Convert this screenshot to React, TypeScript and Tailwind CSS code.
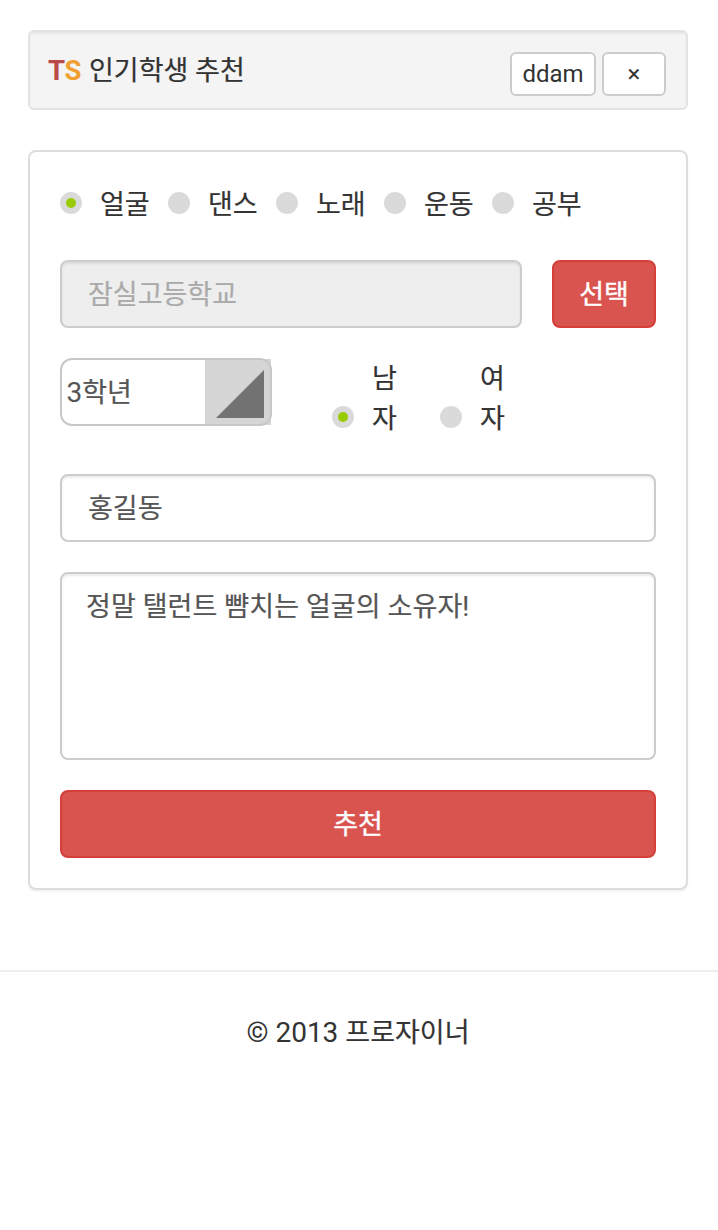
import type { ReactNode } from "react";

const subjects = ["얼굴", "댄스", "노래", "운동", "공부"];

function Radio({ checked }: { checked?: boolean }) {
  return (
    <span className="flex size-[22px] shrink-0 items-center justify-center rounded-full bg-[#dadada]">
      {checked && <span className="size-[10px] rounded-full bg-[#99cc00]" />}
    </span>
  );
}

function Field({ className, children }: { className: string; children: ReactNode }) {
  return (
    <div
      className={`rounded-lg border-2 border-[#cccccc] pt-[13px] shadow-[inset_0_2px_2px_rgba(0,0,0,0.075)] ${className}`}
    >
      {children}
    </div>
  );
}

export default function App() {
  return (
    <div className="min-h-[1230px] w-full bg-white pt-[30px] font-['Roboto','Noto_Sans_CJK_KR',sans-serif] text-[27px] leading-[40px] text-[#333333] [-webkit-text-stroke:0.2px]">
      <header className="ml-7 flex h-20 w-[660px] items-start justify-between rounded-md border-2 border-[#e3e3e3] bg-[#f4f4f4] pr-5 pl-[18px] shadow-[inset_0_2px_2px_rgba(0,0,0,0.05)]">
        <h1 className="mt-[19px] flex">
          <span className="mr-2 text-[27.5px] font-bold tracking-[-0.4px] [-webkit-text-stroke:0]">
            <span className="text-[#b94a48]">T</span>
            <span className="text-[#f0a030]">S</span>
          </span>
          인기학생 추천
        </h1>
        <div className="mt-5 flex gap-1.5">
          <button className="h-11 w-[86px] rounded-md border-2 border-[#cccccc] bg-white text-[24px] leading-[38px] [-webkit-text-stroke:0]">
            ddam
          </button>
          <button className="h-11 w-16 rounded-md border-2 border-[#cccccc] bg-white text-[24px] leading-[40px] [-webkit-text-stroke:0]">
            ×
          </button>
        </div>
      </header>

      <main className="mt-10 ml-7 h-[740px] w-[660px] rounded-lg border-2 border-[#dddddd] bg-white px-[30px] pt-[31px] shadow-[0_2px_2px_rgba(0,0,0,0.05)]">
        <div className="flex h-10">
          {subjects.map((s, i) => (
            <label key={s} className="flex w-[108px] items-center gap-[18px]">
              <Radio checked={i === 0} />
              <span className="pt-1 whitespace-nowrap">{s}</span>
            </label>
          ))}
        </div>

        <div className="mt-[37px] flex justify-between">
          <Field className="h-[68px] w-[462px] bg-[#eeeeee] pl-[26px] text-[#aaaaaa]">잠실고등학교</Field>
          <button className="h-[68px] w-[104px] rounded-lg border-2 border-[#d43f3a] bg-[#d9534f] pt-0.5 text-white [-webkit-text-stroke:0.4px]">
            선택
          </button>
        </div>

        <div className="mt-[30px] flex h-[86px]">
          <div className="relative h-[68px] w-[212px]">
            <svg className="absolute top-px right-px" width="66" height="66" viewBox="0 0 66 66">
              <rect width="66" height="66" fill="#d5d5d5" />
              <path d="M11 59L59 11V59Z" fill="#727272" />
            </svg>
            <div className="relative h-full rounded-xl border-2 border-[#c8c8c8] pt-[13px] pl-[4.5px] text-[#555555]">
              <span className="text-[28px] [-webkit-text-stroke:0]">3</span>학년
            </div>
          </div>
          <div className="ml-[60px] flex gap-[43px]">
            {["남자", "여자"].map((g, i) => (
              <label key={g} className="flex h-20 w-[65px] items-end gap-[18px]">
                <span className="mb-[10px]">
                  <Radio checked={i === 0} />
                </span>
                <span className="h-[79px] w-[25px] break-all">{g}</span>
              </label>
            ))}
          </div>
        </div>

        <Field className="mt-[30px] h-[68px] pl-[26px] text-[#555555]">홍길동</Field>
        <Field className="mt-[30px] h-[188px] pl-6 text-[#555555]">
          <span className="tracking-[0.1px]">정말 탤런트 뺨치는 얼굴의 소유자!</span>
        </Field>
        <button className="mt-[30px] h-[68px] w-full rounded-lg border-2 border-[#d43f3a] bg-[#d9534f] pt-0.5 text-white [-webkit-text-stroke:0.4px]">
          추천
        </button>
      </main>

      <footer className="mt-20 border-t-2 border-[#eeeeee] pt-[41px] pr-0.5 text-center">
        <span className="text-[28px] [-webkit-text-stroke:0]">© 2013 </span>프로자이너
      </footer>
    </div>
  );
}
